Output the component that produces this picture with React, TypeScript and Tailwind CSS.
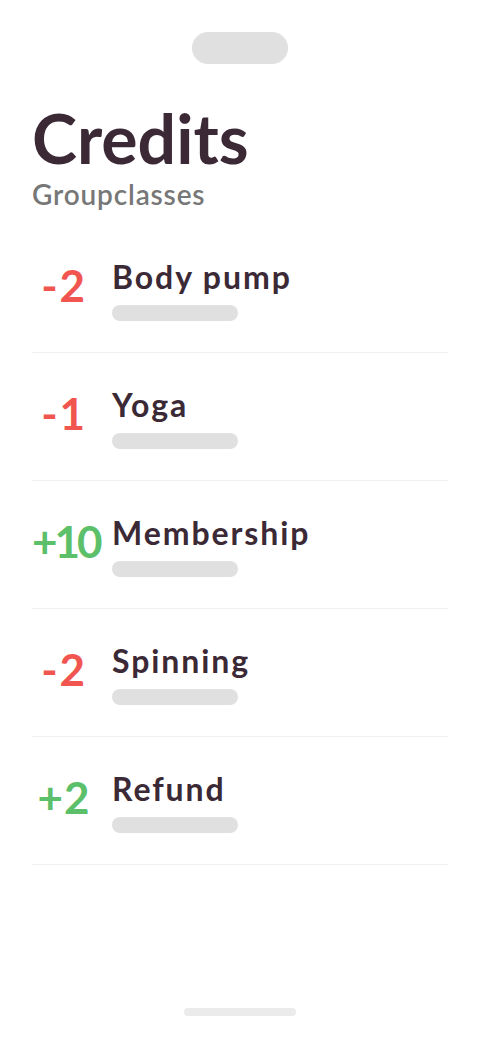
const rows = [
  { amount: '-2', title: 'Body pump', positive: false, tracking: 'tracking-[0.04em]' },
  { amount: '-1', title: 'Yoga', positive: false, tracking: 'tracking-[0.04em]' },
  { amount: '+10', title: 'Membership', positive: true, tracking: 'tracking-[-0.07em]' },
  { amount: '-2', title: 'Spinning', positive: false, tracking: 'tracking-[0.04em]' },
  { amount: '+2', title: 'Refund', positive: true, tracking: 'tracking-[0.02em]' },
];

export default function App() {
  return (
    <div
      className="flex h-[1040px] w-[480px] flex-col bg-white"
      style={{ fontFamily: 'Lato, "Noto Sans", sans-serif' }}
    >
      <div className="flex justify-center pt-8">
        <div className="h-8 w-24 rounded-full bg-[#e0e0e0]" />
      </div>

      <div className="px-8 pt-[38px]">
        <h1 className="text-[68px] leading-[72px] font-bold text-[#3b2936]">Credits</h1>
        <p className="mt-[4px] text-[28px] leading-8 font-semibold tracking-[0.03em] text-[#777777]">
          Groupclasses
        </p>
      </div>

      <ul className="mt-[15px] px-8">
        {rows.map((row) => (
          <li
            key={row.title}
            className="flex h-32 items-start gap-4 border-b border-[#f0f0f0] pt-8"
          >
            <span
              className={
                'mt-[4px] w-16 shrink-0 text-center text-[44px] leading-[48px] font-bold ' +
                row.tracking +
                ' ' +
                (row.positive ? 'text-[#5cbf6a]' : 'text-[#f0564f]')
              }
            >
              {row.amount}
            </span>
            <div className="flex flex-col">
              <span className="text-[32px] leading-10 font-bold tracking-[0.06em] text-[#3b2936]">
                {row.title}
              </span>
              <div className="mt-2 h-4 w-[126px] rounded-full bg-[#e0e0e0]" />
            </div>
          </li>
        ))}
      </ul>

      <div className="mt-auto flex justify-center pb-6">
        <div className="h-2 w-28 rounded-full bg-[#ebebeb]" />
      </div>
    </div>
  );
}
